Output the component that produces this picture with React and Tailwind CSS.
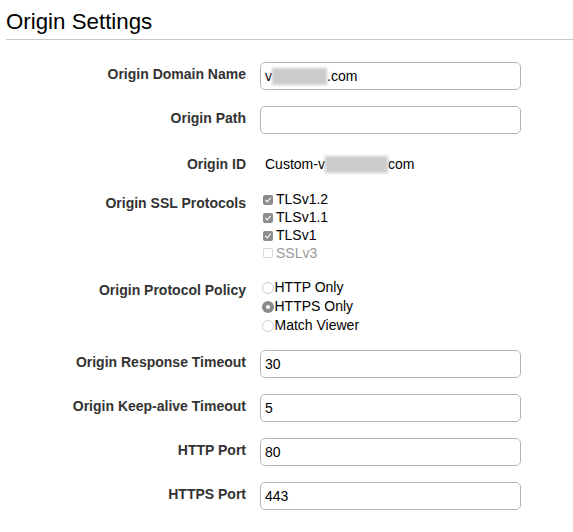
import React from "react";

const font = { fontFamily: '"Liberation Sans", Arial, Helvetica, sans-serif' };

function Blur({ w, className = "" }) {
  return (
    <span
      className={`inline-block h-[17px] bg-[#cbcbcb] blur-[1.5px] align-middle ${className}`}
      style={{ width: w }}
    />
  );
}

function Label({ children, pt = "pt-[4px]" }) {
  return (
    <div className={`w-[240px] shrink-0 text-right text-[14px] leading-[16px] font-bold text-[#333] ${pt}`}>
      {children}
    </div>
  );
}

function Box({ children }) {
  return (
    <div className="ml-[14px] flex h-[28px] w-[261px] items-center rounded-[5px] border border-[#b5b5b5] bg-white pl-[4px] text-[14px] leading-[16px] text-black">
      {children}
    </div>
  );
}

function Check({ label, checked = true, disabled = false }) {
  return (
    <div className="flex items-center h-[17.7px] text-[14px] leading-[17.7px]">
      {checked ? (
        <span className="flex h-[10px] w-[10px] items-center justify-center rounded-[2px] bg-[#8c8c8c]">
          <svg width="8" height="8" viewBox="0 0 8 8">
            <path d="M1.6 4.2 L3.2 5.8 L6.4 2.2" fill="none" stroke="#fff" strokeWidth="1.1" strokeLinecap="round" strokeLinejoin="round" />
          </svg>
        </span>
      ) : (
        <span className="h-[10px] w-[10px] rounded-[2px] border border-[#d9d9d9] bg-white" />
      )}
      <span className={`ml-[3px] ${disabled ? "text-[#9a9a9a]" : "text-black"}`}>{label}</span>
    </div>
  );
}

function Radio({ label, checked = false }) {
  return (
    <div className="flex items-center h-[19px] text-[14px] leading-[19px] text-black">
      {checked ? (
        <span className="flex h-[12px] w-[12px] items-center justify-center rounded-full bg-[#8a8a8a]">
          <span className="h-[4px] w-[4px] rounded-full bg-white" />
        </span>
      ) : (
        <span className="h-[12px] w-[12px] rounded-full border border-[#cfcfcf] bg-white" />
      )}
      <span className="ml-[0.5px]">{label}</span>
    </div>
  );
}

export default function App() {
  return (
    <div className="w-[573px] h-[532px] bg-white pl-[6px]" style={font}>
      <div className="border-b border-[#c8c8c8] pt-[9px] pb-[4px]">
        <h1 className="text-[22.3px] leading-[26px] font-normal text-black">Origin Settings</h1>
      </div>

      <div className="flex flex-col">
        <div className="mt-[22px] flex">
          <Label>Origin Domain Name</Label>
          <Box>
            <span>v</span>
            <Blur w="55px" />
            <span>.com</span>
          </Box>
        </div>

        <div className="mt-[16px] flex">
          <Label>Origin Path</Label>
          <Box />
        </div>

        <div className="mt-[21.7px] flex">
          <Label pt="pt-0">Origin ID</Label>
          <div className="ml-[14px] flex items-center pl-[5px] text-[14px] leading-[16px] text-black">
            <span>Custom-v</span>
            <Blur w="63px" />
            <span>com</span>
          </div>
        </div>

        <div className="mt-[18.8px] flex">
          <Label pt="pt-[4px]">Origin SSL Protocols</Label>
          <div className="ml-[17px] flex flex-col">
            <Check label="TLSv1.2" />
            <Check label="TLSv1.1" />
            <Check label="TLSv1" />
            <Check label="SSLv3" checked={false} disabled />
          </div>
        </div>

        <div className="mt-[16px] flex">
          <Label pt="pt-[3.5px]">Origin Protocol Policy</Label>
          <div className="ml-[16px] flex flex-col">
            <Radio label="HTTP Only" />
            <Radio label="HTTPS Only" checked />
            <Radio label="Match Viewer" />
          </div>
        </div>

        <div className="mt-[14.8px] flex">
          <Label>Origin Response Timeout</Label>
          <Box>30</Box>
        </div>

        <div className="mt-[16px] flex">
          <Label>Origin Keep-alive Timeout</Label>
          <Box>5</Box>
        </div>

        <div className="mt-[16px] flex">
          <Label>HTTP Port</Label>
          <Box>80</Box>
        </div>

        <div className="mt-[16px] flex">
          <Label>HTTPS Port</Label>
          <Box>443</Box>
        </div>
      </div>
    </div>
  );
}
